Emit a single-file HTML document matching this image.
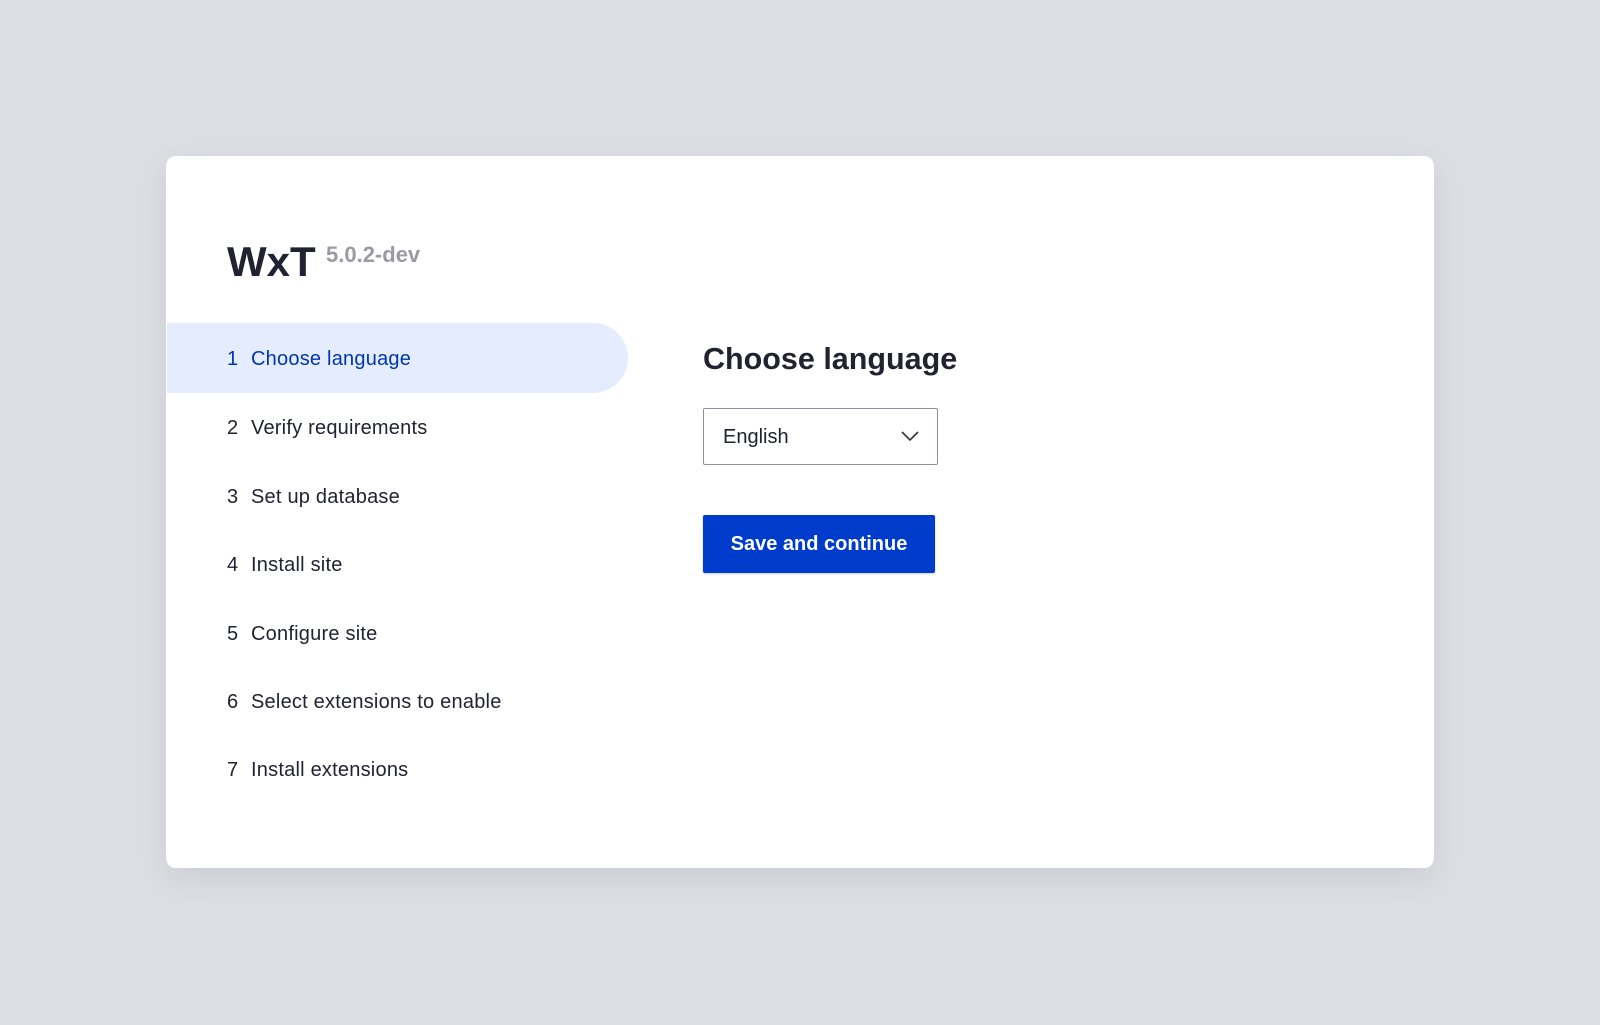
<!DOCTYPE html>
<html><head><style>
html,body{margin:0;padding:0;}
body{width:1600px;height:1025px;background:#dddee3;font-family:"Liberation Sans",Arial,sans-serif;position:relative;overflow:hidden;color:#222330;}
.card{position:absolute;left:166px;top:156px;width:1268px;height:712px;background:#fff;border-radius:10px;box-shadow:0 10px 30px rgba(0,0,0,0.08);}
.logo{position:absolute;left:227px;top:238px;font-size:42px;font-weight:bold;color:#222330;}
.ver{position:absolute;left:326px;top:242px;font-size:22px;color:#8e9196;font-weight:bold;opacity:0.9;}
.pill{position:absolute;left:167px;top:323px;width:461px;height:70px;background:#e5ecfd;border-radius:0 35px 35px 0;}
.nav{position:absolute;left:227px;font-size:20px;line-height:24px;color:#222330;white-space:pre;letter-spacing:0.22px;}
.nav b{font-weight:normal;display:inline-block;width:24px;}
.nav.a{color:#0036b1;}
h1{position:absolute;left:703px;top:340px;margin:0;font-size:30.5px;line-height:38px;font-weight:bold;color:#222330;}
.sel{position:absolute;left:703px;top:408px;width:235px;height:57px;border:1px solid #8e929c;border-radius:2px;box-sizing:border-box;}
.sel span{position:absolute;left:19px;top:16px;font-size:20px;line-height:24px;}
.sel svg{position:absolute;right:18px;top:21px;}
.btn{position:absolute;left:703px;top:515px;width:232px;height:58px;background:#003ccc;border-radius:2px;color:#fff;font-weight:bold;font-size:20px;line-height:58px;text-align:center;box-shadow:0 1px 2px rgba(0,0,0,0.2);}
</style></head><body>
<div class="card"></div>
<div class="logo">WxT</div>
<div class="ver">5.0.2-dev</div>
<div class="pill"></div>
<div class="nav a" style="top:347px"><b>1</b>Choose language</div>
<div class="nav" style="top:416px"><b>2</b>Verify requirements</div>
<div class="nav" style="top:485px"><b>3</b>Set up database</div>
<div class="nav" style="top:553px"><b>4</b>Install site</div>
<div class="nav" style="top:622px"><b>5</b>Configure site</div>
<div class="nav" style="top:690px"><b>6</b>Select extensions to enable</div>
<div class="nav" style="top:758px"><b>7</b>Install extensions</div>
<h1>Choose language</h1>
<div class="sel"><span>English</span><svg width="18" height="12" viewBox="0 0 18 12"><path d="M1 2 L9 10 L17 2" fill="none" stroke="#333" stroke-width="1.6"/></svg></div>
<div class="btn">Save and continue</div>
</body></html>
